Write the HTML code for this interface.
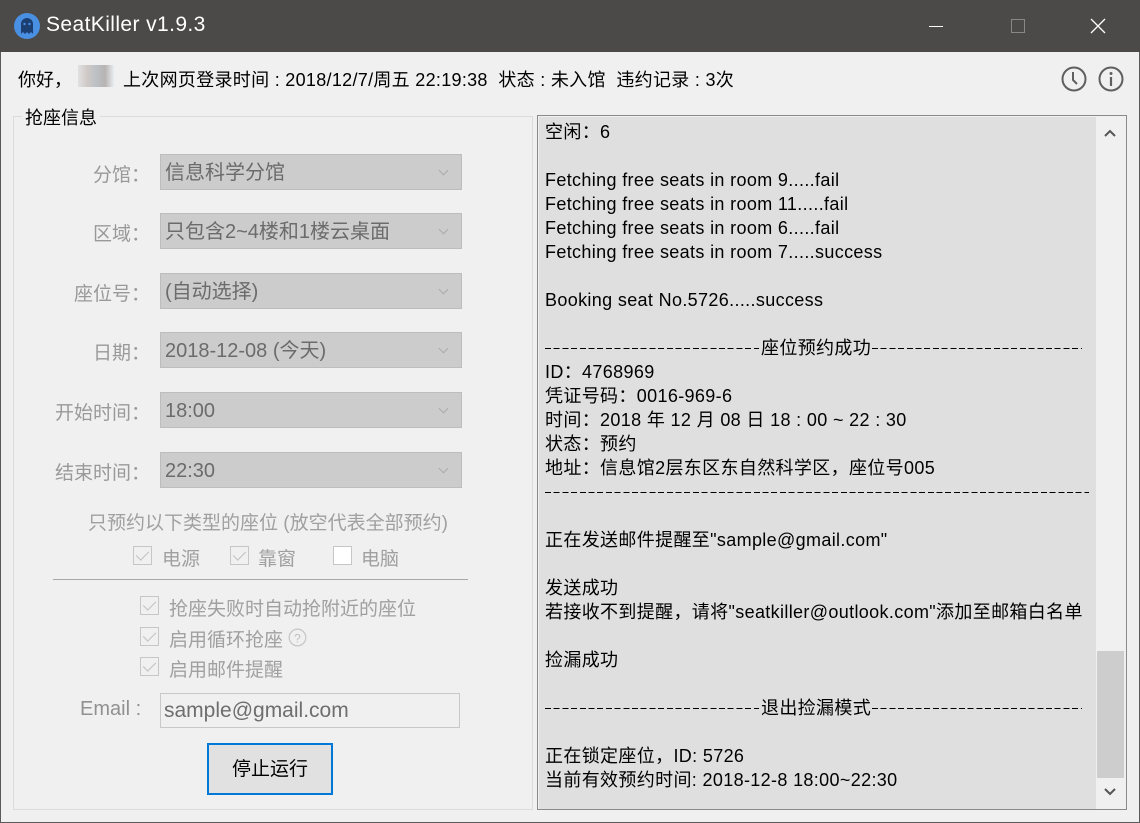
<!DOCTYPE html>
<html><head><meta charset="utf-8"><style>
*{margin:0;padding:0;box-sizing:border-box}
body{width:1140px;height:823px;overflow:hidden;background:#f0f0f0;font-family:"Liberation Sans","Noto Sans CJK SC",sans-serif;position:relative}
.a{position:absolute;white-space:nowrap}
#win{position:absolute;left:0;top:0;width:1140px;height:823px;border:1px solid #5a5a5a}
#title{position:absolute;left:0;top:0;width:1140px;height:52px;background:#4b4a48;color:#fff}
.lbl{position:absolute;font-size:19px;color:#999;text-align:right;width:150px;left:0}
.cb{position:absolute;left:160px;width:302px;height:36px;background:#cccccc;border:1px solid #bdbdbd;color:#6b6b6b;font-size:20px;line-height:36px;padding-left:4px}
.cb:after{content:"";position:absolute;right:14px;top:12px;width:6px;height:6px;border-right:1px solid #aaa;border-bottom:1px solid #aaa;transform:rotate(45deg)}
.chk{position:absolute;width:19px;height:19px;border:1px solid #c6c6c6;background:#f0f0f0}
.chk.on:after{content:"";position:absolute;left:5px;top:1px;width:6px;height:11px;border-right:1.5px solid #c0c0c0;border-bottom:1.5px solid #c0c0c0;transform:rotate(45deg)}
.ct{position:absolute;font-size:19px;color:#a0a0a0}
#log{position:absolute;left:537px;top:115px;width:590px;height:695px;border:1px solid #8a8a8a;background:#f0f0f0}
#txt{position:absolute;left:1px;top:1px;width:557px;height:692px;background:#dfdfdf;overflow:hidden}
.l{position:absolute;left:6px;font-size:18px;color:#000;white-space:nowrap;line-height:24px;letter-spacing:0.35px}
.dash{position:absolute;height:1px;background:repeating-linear-gradient(90deg,#000 0 6px,transparent 6px 8.7px)}
</style></head><body>
<div id="win"></div>
<div id="title">
 <svg class="a" style="left:14px;top:13px" width="26" height="26" viewBox="0 0 26 26"><circle cx="13" cy="13" r="13" fill="#4a90e2"/><path d="M7 21V11a6 6 0 0 1 12 0v10l-2-2-2 2-2-2-2 2-2-2z" fill="#1c3f72"/><circle cx="10.5" cy="11" r="1.2" fill="#4a90e2"/><circle cx="15.5" cy="11" r="1.2" fill="#4a90e2"/></svg>
 <div class="a" style="left:46px;top:13px;font-size:21px;color:#fff;letter-spacing:0.4px">SeatKiller v1.9.3</div>
 <div class="a" style="left:929px;top:26px;width:14px;height:1px;background:#fff"></div>
 <div class="a" style="left:1011px;top:19px;width:14px;height:14px;border:1px solid #888"></div>
 <svg class="a" style="left:1090px;top:18px" width="16" height="16"><path d="M1 1L15 15M15 1L1 15" stroke="#fff" stroke-width="1.3"/></svg>
</div>
<div class="a" style="left:18px;top:66px;font-size:18px;color:#000">你好，</div>
<div class="a" style="left:78px;top:65px;width:36px;height:22px;background:linear-gradient(90deg,#ddd 0,#c8c0bc 25%,#b0b5ba 50%,#a8a4a4 75%,#e8ecef 100%);opacity:.8"></div>
<div class="a" style="left:123px;top:66px;font-size:18px;color:#000;letter-spacing:0.3px">上次网页登录时间 : 2018/12/7/周五 22:19:38&nbsp;&nbsp;状态 : 未入馆&nbsp;&nbsp;违约记录 : 3次</div>
<svg class="a" style="left:1061px;top:66px" width="26" height="26"><circle cx="13" cy="13" r="11.5" fill="none" stroke="#5f5f5f" stroke-width="2"/><path d="M12 6v8l4 4" fill="none" stroke="#5f5f5f" stroke-width="2"/></svg>
<svg class="a" style="left:1098px;top:66px" width="26" height="26"><circle cx="13" cy="13" r="11.5" fill="none" stroke="#5f5f5f" stroke-width="2"/><circle cx="13" cy="7.5" r="1.5" fill="#5f5f5f"/><path d="M13 11v9" stroke="#5f5f5f" stroke-width="2.2"/></svg>

<div class="a" style="left:13px;top:116px;width:520px;height:694px;border:1px solid #dcdcdc"></div>
<div class="a" style="left:22px;top:104px;background:#f0f0f0;padding:0 3px;font-size:18px;color:#000">抢座信息</div>

<div class="lbl" style="top:160px">分馆：</div><div class="cb" style="top:154px">信息科学分馆</div>
<div class="lbl" style="top:219px">区域：</div><div class="cb" style="top:213px">只包含2~4楼和1楼云桌面</div>
<div class="lbl" style="top:279px">座位号：</div><div class="cb" style="top:273px">(自动选择)</div>
<div class="lbl" style="top:338px">日期：</div><div class="cb" style="top:332px">2018-12-08 (今天)</div>
<div class="lbl" style="top:398px">开始时间：</div><div class="cb" style="top:392px">18:00</div>
<div class="lbl" style="top:458px">结束时间：</div><div class="cb" style="top:452px">22:30</div>

<div class="ct" style="left:88px;top:508px">只预约以下类型的座位 (放空代表全部预约)</div>
<div class="chk on" style="left:133px;top:546px"></div><div class="ct" style="left:162px;top:544px">电源</div>
<div class="chk on" style="left:230px;top:546px"></div><div class="ct" style="left:258px;top:544px">靠窗</div>
<div class="chk" style="left:333px;top:546px;background:#fff"></div><div class="ct" style="left:361px;top:544px">电脑</div>
<div class="a" style="left:53px;top:579px;width:415px;height:1px;background:#a8a8a8"></div>
<div class="chk on" style="left:140px;top:596px"></div><div class="ct" style="left:169px;top:594px">抢座失败时自动抢附近的座位</div>
<div class="chk on" style="left:140px;top:627px"></div><div class="ct" style="left:169px;top:625px">启用循环抢座</div>
<svg class="a" style="left:288px;top:628px" width="19" height="19"><circle cx="9.5" cy="9.5" r="8.3" fill="none" stroke="#c8c8c8" stroke-width="1.3"/><text x="9.5" y="14.5" font-size="12" text-anchor="middle" fill="#c0c0c0" font-family="Liberation Sans">?</text></svg>
<div class="chk on" style="left:140px;top:657px"></div><div class="ct" style="left:169px;top:655px">启用邮件提醒</div>
<div class="ct" style="left:80px;top:698px;color:#909090;font-size:20px">Email :</div>
<div class="a" style="left:160px;top:693px;width:300px;height:35px;border:1px solid #c8c8c8;background:#f0f0f0;font-size:21px;color:#6e6e6e;padding:5px 0 0 3px">sample@gmail.com</div>
<div class="a" style="left:207px;top:743px;width:126px;height:52px;border:2px solid #0078d7;background:#e1e1e1;font-size:19px;color:#000;text-align:center;line-height:49px">停止运行</div>

<div id="log"><div id="txt">
<div class="l" style="top:3px">空闲：6</div>
<div class="l" style="top:51px">Fetching free seats in room 9.....fail</div>
<div class="l" style="top:75px">Fetching free seats in room 11.....fail</div>
<div class="l" style="top:99px">Fetching free seats in room 6.....fail</div>
<div class="l" style="top:123px">Fetching free seats in room 7.....success</div>
<div class="l" style="top:171px">Booking seat No.5726.....success</div>
<div class="dash" style="left:6px;top:231px;width:214px"></div>
<div class="l" style="top:219px;left:222px">座位预约成功</div>
<div class="dash" style="left:333px;top:231px;width:210px"></div>
<div class="l" style="top:243px">ID：4768969</div>
<div class="l" style="top:267px">凭证号码：0016-969-6</div>
<div class="l" style="top:291px">时间：2018 年 12 月 08 日 18 : 00 ~ 22 : 30</div>
<div class="l" style="top:315px">状态：预约</div>
<div class="l" style="top:339px">地址：信息馆2层东区东自然科学区，座位号005</div>
<div class="dash" style="left:6px;top:375px;width:544px"></div>
<div class="l" style="top:411px">正在发送邮件提醒至"sample@gmail.com"</div>
<div class="l" style="top:459px">发送成功</div>
<div class="l" style="top:483px">若接收不到提醒，请将"seatkiller@outlook.com"添加至邮箱白名单</div>
<div class="l" style="top:531px">捡漏成功</div>
<div class="dash" style="left:6px;top:591px;width:214px"></div>
<div class="l" style="top:579px;left:222px">退出捡漏模式</div>
<div class="dash" style="left:333px;top:591px;width:210px"></div>
<div class="l" style="top:627px">正在锁定座位，ID: 5726</div>
<div class="l" style="top:651px">当前有效预约时间: 2018-12-8 18:00~22:30</div>
</div>
<div class="a" style="left:559px;top:535px;width:27px;height:127px;background:#cdcdcd"></div>
<svg class="a" style="left:565px;top:12px" width="14" height="10"><path d="M2 8L7 3L12 8" fill="none" stroke="#555" stroke-width="2"/></svg>
<svg class="a" style="left:565px;top:671px" width="14" height="10"><path d="M2 2L7 7L12 2" fill="none" stroke="#555" stroke-width="2"/></svg>
</div>
</body></html>
